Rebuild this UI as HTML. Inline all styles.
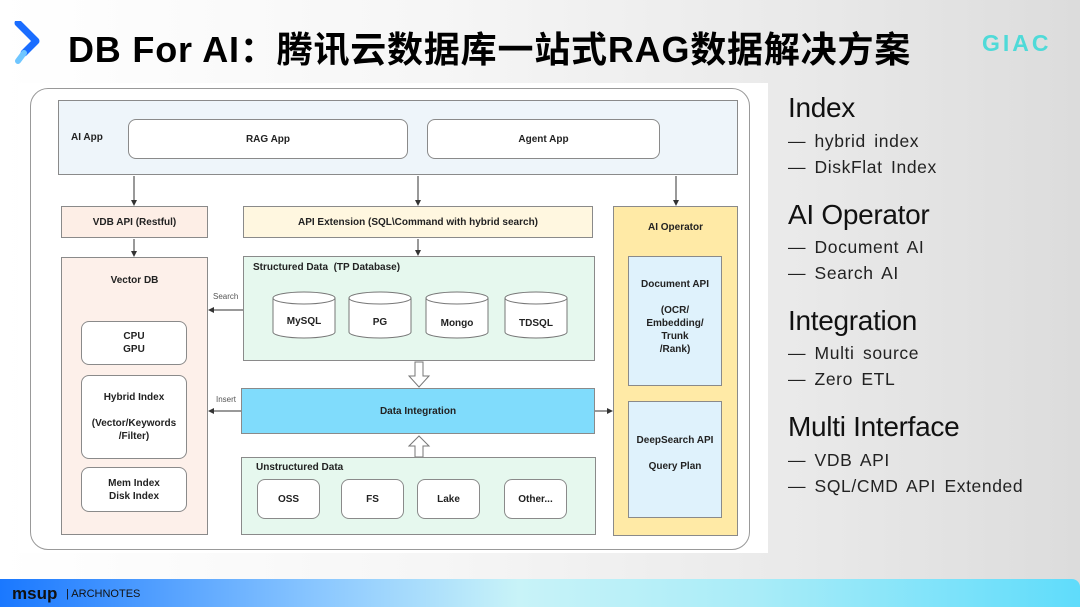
<!DOCTYPE html>
<html><head><meta charset="utf-8"><style>
*{margin:0;padding:0;box-sizing:border-box}
body{width:1080px;height:607px;overflow:hidden;position:relative;font-family:"Liberation Sans","Noto Sans CJK SC",sans-serif;background:linear-gradient(90deg,#fff 0%,#f6f6f6 40%,#e9e9e9 75%,#dcdcdc 100%)}
.a{position:absolute}
.bx{position:absolute;border:1px solid #8a8a8a;display:flex;align-items:center;justify-content:center;text-align:center;font-size:10px;color:#222;line-height:13px;font-weight:bold}
.r{border-radius:8px;background:#fff}
.lbl{position:absolute;font-size:10px;color:#222;font-weight:bold}
.h{position:absolute;left:788px;font-size:28px;color:#111;letter-spacing:-0.3px}
.li{position:absolute;left:788px;font-size:17.5px;color:#222;letter-spacing:0.6px;word-spacing:3px}
</style></head><body>
<svg class="a" style="left:14px;top:21px" width="28" height="44" viewBox="0 0 28 44"><path d="M4 2 L22 20 L10 32" fill="none" stroke="#1a6dff" stroke-width="7" stroke-linejoin="round" stroke-linecap="round"/><path d="M10 32 L4 40" stroke="#6fc6ff" stroke-width="6" stroke-linecap="round"/></svg>
<div class="a" style="left:68px;top:21px;font-size:36px;color:#000;font-weight:bold;white-space:nowrap;letter-spacing:0.8px">DB For AI：腾讯云数据库一站式RAG数据解决方案</div>
<div class="a" style="left:982px;top:30px;font-size:23px;color:#4fdad8;font-weight:bold;letter-spacing:3px">GIAC</div>

<div class="a" style="left:18px;top:83px;width:750px;height:470px;background:#fff"></div>
<div class="a" style="left:30px;top:88px;width:720px;height:462px;border:1.5px solid #999;border-radius:18px"></div>

<div class="bx" style="left:58px;top:100px;width:680px;height:75px;background:#eef5fa;justify-content:flex-start;padding-left:12px">AI App</div>
<div class="bx r" style="left:128px;top:119px;width:280px;height:40px">RAG App</div>
<div class="bx r" style="left:427px;top:119px;width:233px;height:40px">Agent App</div>

<div class="bx" style="left:61px;top:206px;width:147px;height:32px;background:#fdeee6">VDB API (Restful)</div>
<div class="bx" style="left:243px;top:206px;width:350px;height:32px;background:#fff7e0">API Extension (SQL\Command with hybrid search)</div>
<div class="bx" style="left:613px;top:206px;width:125px;height:330px;background:#ffeaa6;align-items:flex-start;padding-top:14px">AI Operator</div>
<div class="bx" style="left:628px;top:256px;width:94px;height:130px;background:#dff2fc;align-items:flex-start;padding-top:21px">Document API<br><br>(OCR/<br>Embedding/<br>Trunk<br>/Rank)</div>
<div class="bx" style="left:628px;top:401px;width:94px;height:117px;background:#dff2fc">DeepSearch API<br><br>Query Plan<br><br></div>

<div class="bx" style="left:61px;top:257px;width:147px;height:278px;background:#fdf0ea;align-items:flex-start;padding-top:16px">Vector DB</div>
<div class="bx r" style="left:81px;top:321px;width:106px;height:44px">CPU<br>GPU</div>
<div class="bx r" style="left:81px;top:375px;width:106px;height:84px">Hybrid Index<br><br>(Vector/Keywords<br>/Filter)</div>
<div class="bx r" style="left:81px;top:467px;width:106px;height:45px">Mem Index<br>Disk Index</div>

<div class="bx" style="left:243px;top:256px;width:352px;height:105px;background:#e6f8ee"></div>
<div class="lbl" style="left:253px;top:262px">Structured Data &nbsp;(TP Database)</div>
<svg class="a" style="left:270px;top:290px" width="300" height="52" viewBox="0 0 300 52">
<g fill="#fff" stroke="#777" stroke-width="1">
<path d="M3 8 A31 6 0 0 1 65 8 V42 A31 6 0 0 1 3 42 Z"/><path d="M3 8 A31 6 0 0 0 65 8"/>
<path d="M79 8 A31 6 0 0 1 141 8 V42 A31 6 0 0 1 79 42 Z"/><path d="M79 8 A31 6 0 0 0 141 8"/>
<path d="M156 8 A31 6 0 0 1 218 8 V42 A31 6 0 0 1 156 42 Z"/><path d="M156 8 A31 6 0 0 0 218 8"/>
<path d="M235 8 A31 6 0 0 1 297 8 V42 A31 6 0 0 1 235 42 Z"/><path d="M235 8 A31 6 0 0 0 297 8"/>
</g>
<g font-size="10" fill="#222" text-anchor="middle" font-family="Liberation Sans" font-weight="bold"><text x="34" y="34">MySQL</text><text x="110" y="35">PG</text><text x="187" y="36">Mongo</text><text x="266" y="36">TDSQL</text></g>
</svg>
<svg class="a" style="left:408px;top:361px" width="24" height="98" viewBox="0 0 24 98">
<path d="M7 1 H15 V15 H21 L11 26 L1 15 H7 Z" fill="#fff" stroke="#777"/>
<path d="M7 96 H15 V85 H21 L11 75 L1 85 H7 Z" fill="#fff" stroke="#777"/>
</svg>
<div class="bx" style="left:241px;top:388px;width:354px;height:46px;background:#80dcfc">Data Integration</div>
<div class="bx" style="left:241px;top:457px;width:355px;height:78px;background:#e6f8ee"></div>
<div class="lbl" style="left:256px;top:462px">Unstructured Data</div>
<div class="bx r" style="left:257px;top:479px;width:63px;height:40px">OSS</div>
<div class="bx r" style="left:341px;top:479px;width:63px;height:40px">FS</div>
<div class="bx r" style="left:417px;top:479px;width:63px;height:40px">Lake</div>
<div class="bx r" style="left:504px;top:479px;width:63px;height:40px">Other...</div>

<svg class="a" style="left:0;top:0" width="768" height="553" viewBox="0 0 768 553">
<defs><marker id="m" markerWidth="6" markerHeight="6" refX="5" refY="3" orient="auto"><path d="M0 0 L6 3 L0 6 Z" fill="#333"/></marker></defs>
<g stroke="#333" stroke-width="1" marker-end="url(#m)">
<line x1="134" y1="176" x2="134" y2="205"/><line x1="134" y1="239" x2="134" y2="256"/>
<line x1="418" y1="176" x2="418" y2="205"/><line x1="418" y1="239" x2="418" y2="255"/>
<line x1="676" y1="176" x2="676" y2="205"/>
<line x1="243" y1="310" x2="209" y2="310"/><line x1="241" y1="411" x2="209" y2="411"/>
<line x1="595" y1="411" x2="612" y2="411"/>
</g>
<g font-size="8" fill="#555" font-family="Liberation Sans"><text x="213" y="299">Search</text><text x="216" y="402">Insert</text></g>
</svg>

<div class="h" style="top:92px">Index</div>
<div class="li" style="top:131px">— hybrid index</div>
<div class="li" style="top:157px">— DiskFlat Index</div>
<div class="h" style="top:199px">AI Operator</div>
<div class="li" style="top:237px">— Document AI</div>
<div class="li" style="top:263px">— Search AI</div>
<div class="h" style="top:305px">Integration</div>
<div class="li" style="top:343px">— Multi source</div>
<div class="li" style="top:369px">— Zero ETL</div>
<div class="h" style="top:411px">Multi Interface</div>
<div class="li" style="top:450px">— VDB API</div>
<div class="li" style="top:476px">— SQL/CMD API Extended</div>

<div class="a" style="left:0;top:579px;width:1080px;height:28px;border-top-right-radius:8px;background:linear-gradient(90deg,#1a78ff 0%,#8cc8ff 30%,#c8f3f8 48%,#a9ecf8 70%,#5fdcfb 100%)"></div>
<div class="a" style="left:12px;top:584px;font-size:17px;color:#111;font-weight:bold">msup</div>
<div class="a" style="left:66px;top:588px;font-size:11px;color:#111">| ARCHNOTES</div>
</body></html>
